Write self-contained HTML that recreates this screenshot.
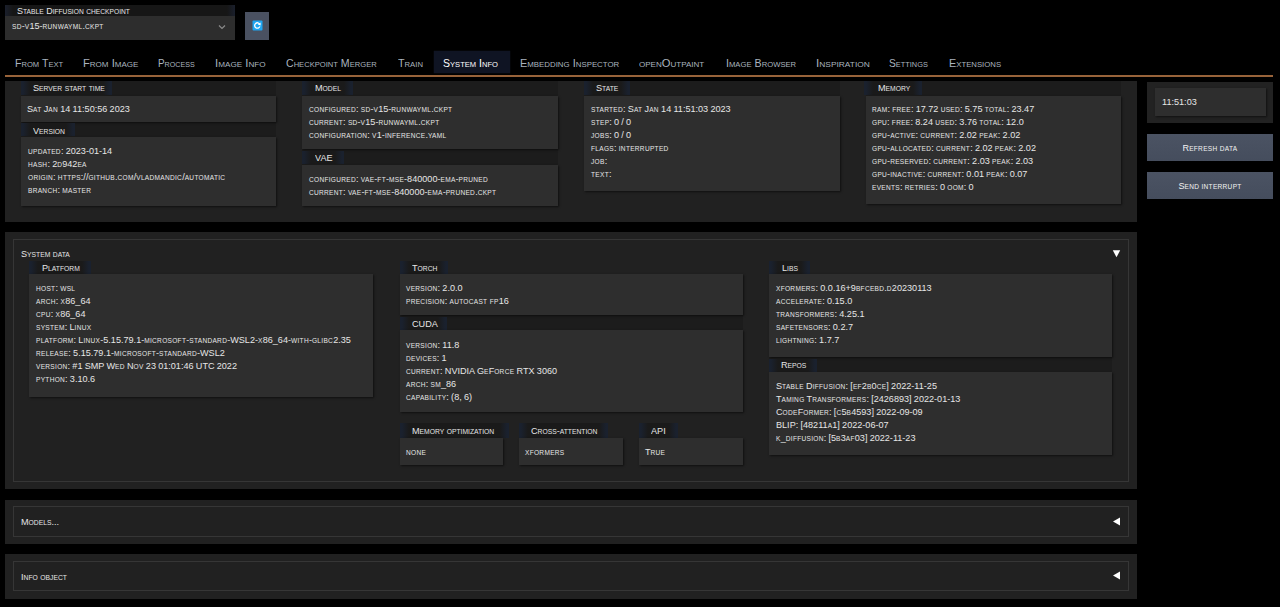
<!DOCTYPE html><html><head><meta charset="utf-8"><style>
*{box-sizing:border-box;margin:0;padding:0}
html,body{width:1280px;height:607px;overflow:hidden;background:#000}
body{position:relative;font-family:"Liberation Sans",sans-serif;color:#e6e6e6}
i{font-style:normal;font-size:.72em;letter-spacing:.3px}
u{text-decoration:none}
.a{position:absolute}
.tab{position:absolute;top:58px;font-size:10.5px;transform-origin:0 0;color:#aab4bf;white-space:nowrap;line-height:1}
.tab.sel{color:#fff}
.tab i,.lt i{letter-spacing:0}
.panel{position:absolute;background:#212121}
.band{position:absolute;background:#1c1c1c}
.box{position:absolute;background:#2e2e2e;box-shadow:1px 1px 2px rgba(0,0,0,.55)}
.lbl{position:absolute;background:linear-gradient(90deg,#1a212e 0,#1a212e 2px,#1a1a1a 9px,#1a1a1a calc(100% - 9px),#1a212e calc(100% - 2px),#1a212e 100%)}
.lt{position:absolute;font-size:9.5px;transform:scaleX(.96);transform-origin:0 0;color:#e6e6e6;white-space:nowrap;line-height:1}
.ln{position:absolute;font-size:9.1px;word-spacing:-.3px;white-space:nowrap;line-height:1;color:#e6e6e6}
.btn{position:absolute;background:linear-gradient(180deg,#4b5363,#454d5d);color:#f2f2f2;font-size:9.1px;word-spacing:-.3px;text-align:center;line-height:1}
.sp{position:absolute;border:1px solid #363636}
</style></head><body>
<div class="a" style="left:5px;top:5px;width:230px;height:11px;background:linear-gradient(90deg,#1a1f2c,#161616 8px,#161616 222px,#1a1f2c)"></div>
<div class="a" style="left:5px;top:16px;width:230px;height:24px;background:#2d2d2d"></div>
<div class="lt" style="left:17px;top:6px;font-size:9.4px">S<i style="font-size:0.74em">TABLE</i> D<i style="font-size:0.74em">IFFUSION</i> <i style="font-size:0.74em">CHECKPOINT</i></div>
<div class="ln" style="left:12px;top:22px;"><i>SD</i>-<i>V</i>15-<i>RUNWAYML</i>.<i>CKPT</i></div>
<svg class="a" style="left:218px;top:24px" width="8" height="6" viewBox="0 0 8 6"><path d="M1 1.5 L4 4.5 L7 1.5" stroke="#8a8a8a" stroke-width="1.2" fill="none"/></svg>
<div class="a" style="left:245px;top:12px;width:24px;height:28px;background:#4a5161"></div>
<svg class="a" style="left:252px;top:20px" width="11" height="11" viewBox="0 0 11 11"><rect x="0.5" y="0.5" width="10" height="10" rx="1" fill="#1ea6f2"/><path d="M7.8 4.3 A2.7 2.7 0 1 0 7.9 6.4" stroke="#fff" stroke-width="1.3" fill="none"/><path d="M8.6 2.4 L8.6 5.4 L5.8 4.6 Z" fill="#fff"/></svg>
<div class="a" style="left:434px;top:51px;width:76px;height:22px;background:#0f1423;box-shadow:0 0 1px #1a2030"></div>
<div class="tab" style="left:15.00px;transform:scaleX(1.006)">F<i>ROM</i> T<i>EXT</i></div>
<div class="tab" style="left:83.15px;transform:scaleX(1.063)">F<i>ROM</i> I<i>MAGE</i></div>
<div class="tab" style="left:158.15px;transform:scaleX(0.942)">P<i>ROCESS</i></div>
<div class="tab" style="left:215.10px;transform:scaleX(1.080)">I<i>MAGE</i> I<i>NFO</i></div>
<div class="tab" style="left:285.90px;transform:scaleX(1.006)">C<i>HECKPOINT</i> M<i>ERGER</i></div>
<div class="tab" style="left:397.90px;transform:scaleX(1.021)">T<i>RAIN</i></div>
<div class="tab sel" style="left:443.40px;transform:scaleX(1.004)">S<i>YSTEM</i> I<i>NFO</i></div>
<div class="tab" style="left:520.20px;transform:scaleX(1.041)">E<i>MBEDDING</i> I<i>NSPECTOR</i></div>
<div class="tab" style="left:639.20px;transform:scaleX(1.064)"><i>OPEN</i>O<i>UTPAINT</i></div>
<div class="tab" style="left:725.90px;transform:scaleX(1.016)">I<i>MAGE</i> B<i>ROWSER</i></div>
<div class="tab" style="left:815.90px;transform:scaleX(1.111)">I<i>NSPIRATION</i></div>
<div class="tab" style="left:888.80px;transform:scaleX(0.978)">S<i>ETTINGS</i></div>
<div class="tab" style="left:949.00px;transform:scaleX(1.029)">E<i>XTENSIONS</i></div>
<div class="a" style="left:5px;top:75px;width:1268px;height:2px;background:#98633a"></div>
<div class="panel" style="left:5px;top:81px;width:1132px;height:141px"></div>
<div class="band" style="left:21px;top:81px;width:255px;height:125px;"></div>
<div class="lbl" style="left:21px;top:81px;width:91px;height:14px;"></div>
<div class="lt" style="left:33px;top:83px;">S<i style="font-size:0.74em">ERVER</i> <i style="font-size:0.74em">START</i> <i style="font-size:0.74em">TIME</i></div>
<div class="box" style="left:21px;top:96px;width:255px;height:26px;"></div>
<div class="ln" style="left:27px;top:105px;">S<i>AT</i> J<i>AN</i> 14 11<u>:</u>50<u>:</u>56 2023</div>
<div class="lbl" style="left:21px;top:123px;width:54px;height:13px;"></div>
<div class="lt" style="left:33px;top:126px;">V<i style="font-size:0.74em">ERSION</i></div>
<div class="box" style="left:21px;top:137px;width:255px;height:69px;"></div>
<div class="ln" style="left:28px;top:147px;"><i>UPDATED</i><u>:</u> 2023-01-14</div>
<div class="ln" style="left:28px;top:160px;"><i>HASH</i><u>:</u> 2<i>D</i>942<i>EA</i></div>
<div class="ln" style="left:28px;top:173px;"><i>ORIGIN</i><u>:</u> <i>HTTPS</i><u>:</u>//<i>GITHUB</i>.<i>COM</i>/<i>VLADMANDIC</i>/<i>AUTOMATIC</i></div>
<div class="ln" style="left:28px;top:186px;"><i>BRANCH</i><u>:</u> <i>MASTER</i></div>
<div class="band" style="left:302px;top:81px;width:256px;height:125px;"></div>
<div class="lbl" style="left:302px;top:81px;width:51px;height:14px;"></div>
<div class="lt" style="left:315px;top:83px;">M<i style="font-size:0.74em">ODEL</i></div>
<div class="box" style="left:302px;top:96px;width:256px;height:53px;"></div>
<div class="ln" style="left:309px;top:105px;"><i>CONFIGURED</i><u>:</u> <i>SD</i>-<i>V</i>15-<i>RUNWAYML</i>.<i>CKPT</i></div>
<div class="ln" style="left:309px;top:118px;"><i>CURRENT</i><u>:</u> <i>SD</i>-<i>V</i>15-<i>RUNWAYML</i>.<i>CKPT</i></div>
<div class="ln" style="left:309px;top:131px;"><i>CONFIGURATION</i><u>:</u> <i>V</i>1-<i>INFERENCE</i>.<i>YAML</i></div>
<div class="lbl" style="left:302px;top:151px;width:42px;height:13px;"></div>
<div class="lt" style="left:315px;top:153px;">VAE</div>
<div class="box" style="left:302px;top:165px;width:256px;height:41px;"></div>
<div class="ln" style="left:309px;top:175px;"><i>CONFIGURED</i><u>:</u> <i>VAE</i>-<i>FT</i>-<i>MSE</i>-840000-<i>EMA</i>-<i>PRUNED</i></div>
<div class="ln" style="left:309px;top:188px;"><i>CURRENT</i><u>:</u> <i>VAE</i>-<i>FT</i>-<i>MSE</i>-840000-<i>EMA</i>-<i>PRUNED</i>.<i>CKPT</i></div>
<div class="band" style="left:584px;top:81px;width:256px;height:110px;"></div>
<div class="lbl" style="left:584px;top:81px;width:46px;height:14px;"></div>
<div class="lt" style="left:596px;top:83px;">S<i style="font-size:0.74em">TATE</i></div>
<div class="box" style="left:584px;top:96px;width:256px;height:95px;"></div>
<div class="ln" style="left:591px;top:105px;"><i>STARTED</i><u>:</u> S<i>AT</i> J<i>AN</i> 14 11<u>:</u>51<u>:</u>03 2023</div>
<div class="ln" style="left:591px;top:118px;"><i>STEP</i><u>:</u> 0 / 0</div>
<div class="ln" style="left:591px;top:131px;"><i>JOBS</i><u>:</u> 0 / 0</div>
<div class="ln" style="left:591px;top:144px;"><i>FLAGS</i><u>:</u> <i>INTERRUPTED</i></div>
<div class="ln" style="left:591px;top:157px;"><i>JOB</i><u>:</u></div>
<div class="ln" style="left:591px;top:170px;"><i>TEXT</i><u>:</u></div>
<div class="band" style="left:866px;top:81px;width:255px;height:123px;"></div>
<div class="lbl" style="left:864px;top:81px;width:58px;height:14px;"></div>
<div class="lt" style="left:878px;top:83px;">M<i style="font-size:0.74em">EMORY</i></div>
<div class="box" style="left:866px;top:96px;width:255px;height:108px;"></div>
<div class="ln" style="left:872px;top:105px;"><i>RAM</i><u>:</u> <i>FREE</i><u>:</u> 17.72 <i>USED</i><u>:</u> 5.75 <i>TOTAL</i><u>:</u> 23.47</div>
<div class="ln" style="left:872px;top:118px;"><i>GPU</i><u>:</u> <i>FREE</i><u>:</u> 8.24 <i>USED</i><u>:</u> 3.76 <i>TOTAL</i><u>:</u> 12.0</div>
<div class="ln" style="left:872px;top:131px;"><i>GPU</i>-<i>ACTIVE</i><u>:</u> <i>CURRENT</i><u>:</u> 2.02 <i>PEAK</i><u>:</u> 2.02</div>
<div class="ln" style="left:872px;top:144px;"><i>GPU</i>-<i>ALLOCATED</i><u>:</u> <i>CURRENT</i><u>:</u> 2.02 <i>PEAK</i><u>:</u> 2.02</div>
<div class="ln" style="left:872px;top:157px;"><i>GPU</i>-<i>RESERVED</i><u>:</u> <i>CURRENT</i><u>:</u> 2.03 <i>PEAK</i><u>:</u> 2.03</div>
<div class="ln" style="left:872px;top:170px;"><i>GPU</i>-<i>INACTIVE</i><u>:</u> <i>CURRENT</i><u>:</u> 0.01 <i>PEAK</i><u>:</u> 0.07</div>
<div class="ln" style="left:872px;top:183px;"><i>EVENTS</i><u>:</u> <i>RETRIES</i><u>:</u> 0 <i>OOM</i><u>:</u> 0</div>
<div class="panel" style="left:1147px;top:82px;width:126px;height:41px;background:#222"></div>
<div class="box" style="left:1155px;top:88px;width:111px;height:28px;"></div>
<div class="ln" style="left:1162px;top:98px;">11<u>:</u>51<u>:</u>03</div>
<div class="btn" style="left:1147px;top:134px;width:126px;height:27px;padding-top:9.5px">R<i>EFRESH</i> <i>DATA</i></div>
<div class="btn" style="left:1147px;top:172px;width:126px;height:27px;padding-top:9.699999999999989px">S<i>END</i> <i>INTERRUPT</i></div>
<div class="panel" style="left:5px;top:232px;width:1132px;height:257px"></div>
<div class="sp" style="left:13px;top:239px;width:1116px;height:243px;"></div>
<div class="lt" style="left:21px;top:249px;">S<i style="font-size:0.74em">YSTEM</i> <i style="font-size:0.74em">DATA</i></div>
<svg class="a" style="left:1112px;top:250px" width="9" height="8" viewBox="0 0 9 8"><path d="M0.8 0.3 H8.2 L4.5 7.3 Z" fill="#fff"/></svg>
<div class="lbl" style="left:29px;top:261px;width:62px;height:13px;"></div>
<div class="lt" style="left:42px;top:263px;">P<i style="font-size:0.74em">LATFORM</i></div>
<div class="box" style="left:29px;top:274px;width:344px;height:123px;"></div>
<div class="ln" style="left:36px;top:284px;"><i>HOST</i><u>:</u> <i>WSL</i></div>
<div class="ln" style="left:36px;top:297px;"><i>ARCH</i><u>:</u> <i>X</i>86_64</div>
<div class="ln" style="left:36px;top:310px;"><i>CPU</i><u>:</u> <i>X</i>86_64</div>
<div class="ln" style="left:36px;top:323px;"><i>SYSTEM</i><u>:</u> L<i>INUX</i></div>
<div class="ln" style="left:36px;top:336px;"><i>PLATFORM</i><u>:</u> L<i>INUX</i>-5.15.79.1-<i>MICROSOFT</i>-<i>STANDARD</i>-WSL2-<i>X</i>86_64-<i>WITH</i>-<i>GLIBC</i>2.35</div>
<div class="ln" style="left:36px;top:349px;"><i>RELEASE</i><u>:</u> 5.15.79.1-<i>MICROSOFT</i>-<i>STANDARD</i>-WSL2</div>
<div class="ln" style="left:36px;top:362px;"><i>VERSION</i><u>:</u> #1 SMP W<i>ED</i> N<i>OV</i> 23 01<u>:</u>01<u>:</u>46 UTC 2022</div>
<div class="ln" style="left:36px;top:375px;"><i>PYTHON</i><u>:</u> 3.10.6</div>
<div class="band" style="left:400px;top:315px;width:343px;height:16px;"></div>
<div class="lbl" style="left:400px;top:261px;width:48px;height:13px;"></div>
<div class="lt" style="left:412px;top:263px;">T<i style="font-size:0.74em">ORCH</i></div>
<div class="box" style="left:400px;top:274px;width:343px;height:41px;"></div>
<div class="ln" style="left:406px;top:284px;"><i>VERSION</i><u>:</u> 2.0.0</div>
<div class="ln" style="left:406px;top:297px;"><i>PRECISION</i><u>:</u> <i>AUTOCAST</i> <i>FP</i>16</div>
<div class="lbl" style="left:400px;top:317px;width:47px;height:13px;"></div>
<div class="lt" style="left:412px;top:319px;">CUDA</div>
<div class="box" style="left:400px;top:330px;width:343px;height:82px;"></div>
<div class="ln" style="left:406px;top:341px;"><i>VERSION</i><u>:</u> 11.8</div>
<div class="ln" style="left:406px;top:354px;"><i>DEVICES</i><u>:</u> 1</div>
<div class="ln" style="left:406px;top:367px;"><i>CURRENT</i><u>:</u> NVIDIA G<i>E</i>F<i>ORCE</i> RTX 3060</div>
<div class="ln" style="left:406px;top:380px;"><i>ARCH</i><u>:</u> <i>SM</i>_86</div>
<div class="ln" style="left:406px;top:393px;"><i>CAPABILITY</i><u>:</u> (8, 6)</div>
<div class="lbl" style="left:400px;top:423px;width:109px;height:15px;"></div>
<div class="lt" style="left:412px;top:426px;">M<i style="font-size:0.74em">EMORY</i> <i style="font-size:0.74em">OPTIMIZATION</i></div>
<div class="box" style="left:400px;top:438px;width:103px;height:27px;"></div>
<div class="ln" style="left:406px;top:448px;"><i>NONE</i></div>
<div class="lbl" style="left:519px;top:423px;width:89px;height:15px;"></div>
<div class="lt" style="left:531px;top:426px;">C<i style="font-size:0.74em">ROSS</i>-<i style="font-size:0.74em">ATTENTION</i></div>
<div class="box" style="left:519px;top:438px;width:104px;height:27px;"></div>
<div class="ln" style="left:525px;top:448px;"><i>XFORMERS</i></div>
<div class="lbl" style="left:639px;top:423px;width:39px;height:15px;"></div>
<div class="lt" style="left:651px;top:426px;">API</div>
<div class="box" style="left:639px;top:438px;width:104px;height:27px;"></div>
<div class="ln" style="left:645px;top:448px;">T<i>RUE</i></div>
<div class="band" style="left:769px;top:357px;width:343px;height:15px;"></div>
<div class="lbl" style="left:769px;top:261px;width:41px;height:13px;"></div>
<div class="lt" style="left:782px;top:263px;">L<i style="font-size:0.74em">IBS</i></div>
<div class="box" style="left:769px;top:274px;width:343px;height:83px;"></div>
<div class="ln" style="left:776px;top:284px;"><i>XFORMERS</i><u>:</u> 0.0.16+9<i>BFCEBD</i>.<i>D</i>20230113</div>
<div class="ln" style="left:776px;top:297px;"><i>ACCELERATE</i><u>:</u> 0.15.0</div>
<div class="ln" style="left:776px;top:310px;"><i>TRANSFORMERS</i><u>:</u> 4.25.1</div>
<div class="ln" style="left:776px;top:323px;"><i>SAFETENSORS</i><u>:</u> 0.2.7</div>
<div class="ln" style="left:776px;top:336px;"><i>LIGHTNING</i><u>:</u> 1.7.7</div>
<div class="lbl" style="left:769px;top:359px;width:48px;height:13px;"></div>
<div class="lt" style="left:781px;top:360px;">R<i style="font-size:0.74em">EPOS</i></div>
<div class="box" style="left:769px;top:372px;width:343px;height:83px;"></div>
<div class="ln" style="left:776px;top:382px;">S<i>TABLE</i> D<i>IFFUSION</i><u>:</u> [<i>EF</i>2<i>B</i>0<i>CE</i>] 2022-11-25</div>
<div class="ln" style="left:776px;top:395px;">T<i>AMING</i> T<i>RANSFORMERS</i><u>:</u> [2426893] 2022-01-13</div>
<div class="ln" style="left:776px;top:408px;">C<i>ODE</i>F<i>ORMER</i><u>:</u> [<i>C</i>5<i>B</i>4593] 2022-09-09</div>
<div class="ln" style="left:776px;top:421px;">BLIP<u>:</u> [48211<i>A</i>1] 2022-06-07</div>
<div class="ln" style="left:776px;top:434px;"><i>K</i>_<i>DIFFUSION</i><u>:</u> [5<i>B</i>3<i>AF</i>03] 2022-11-23</div>
<div class="panel" style="left:5px;top:500px;width:1132px;height:44px"></div>
<div class="sp" style="left:13px;top:506px;width:1116px;height:31px;"></div>
<div class="lt" style="left:21px;top:517px;">M<i style="font-size:0.74em">ODELS</i>...</div>
<svg class="a" style="left:1112px;top:517px" width="9" height="9" viewBox="0 0 9 9"><path d="M8 0.5 V8.5 L1 4.5 Z" fill="#fff"/></svg>
<div class="panel" style="left:5px;top:554px;width:1132px;height:45px"></div>
<div class="sp" style="left:13px;top:561px;width:1116px;height:30px;"></div>
<div class="lt" style="left:21px;top:572px;">I<i style="font-size:0.74em">NFO</i> <i style="font-size:0.74em">OBJECT</i></div>
<svg class="a" style="left:1112px;top:571px" width="9" height="9" viewBox="0 0 9 9"><path d="M8 0.5 V8.5 L1 4.5 Z" fill="#fff"/></svg>
</body></html>
